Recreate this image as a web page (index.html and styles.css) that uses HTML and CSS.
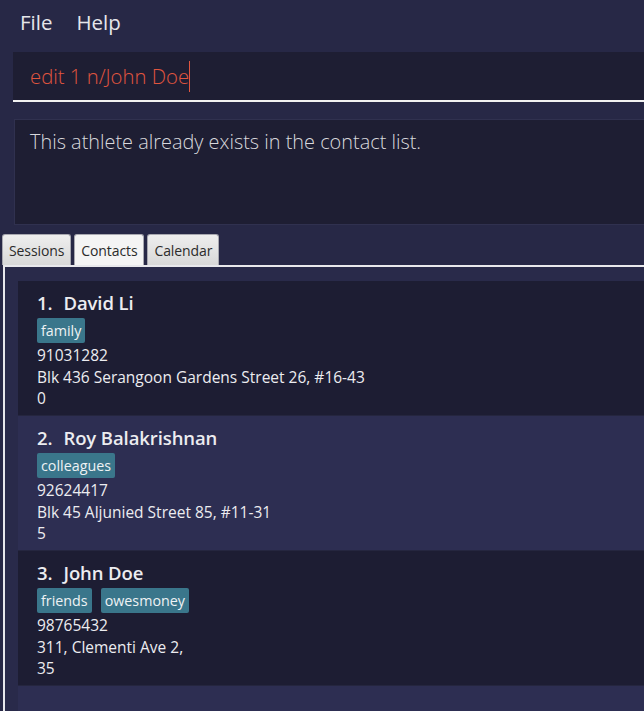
FILE: index.html
```html
<!DOCTYPE html>
<html>
<head>
<meta charset="utf-8">
<link rel="stylesheet" href="styles.css">
</head>
<body>
<div class="app">
  <div class="menubar">
    <span class="menu-item">File</span>
    <span class="menu-item">Help</span>
  </div>
  <div class="command">
    <span class="command-text">edit 1 n/John Doe</span><span class="caret"></span>
  </div>
  <div class="result">This athlete already exists in the contact list.</div>
  <div class="tabs">
    <div class="tab">Sessions</div>
    <div class="tab selected">Contacts</div>
    <div class="tab">Calendar</div>
  </div>
  <div class="panel">
    <div class="list">
      <div class="cell odd">
        <div class="name"><span class="idx">1.</span>David Li</div>
        <div class="tags"><span class="tag">family</span></div>
        <div class="line">91031282</div>
        <div class="line">Blk 436 Serangoon Gardens Street 26, #16-43</div>
        <div class="line">0</div>
      </div>
      <div class="cell even">
        <div class="name"><span class="idx">2.</span>Roy Balakrishnan</div>
        <div class="tags"><span class="tag">colleagues</span></div>
        <div class="line">92624417</div>
        <div class="line">Blk 45 Aljunied Street 85, #11-31</div>
        <div class="line">5</div>
      </div>
      <div class="cell odd">
        <div class="name"><span class="idx">3.</span>John Doe</div>
        <div class="tags"><span class="tag">friends</span><span class="tag">owesmoney</span></div>
        <div class="line">98765432</div>
        <div class="line">311, Clementi Ave 2,</div>
        <div class="line">35</div>
      </div>
      <div class="cell even"></div>
    </div>
  </div>
</div>
</body>
</html>
```
FILE: styles.css
```css
html, body {
  margin: 0;
  padding: 0;
  background: #272846;
  overflow: hidden;
}
body {
  width: 644px;
  height: 711px;
  font-family: "Open Sans", "Noto Sans", sans-serif;
}
.app {
  display: flex;
  flex-direction: column;
  height: 711px;
}
.menubar {
  display: flex;
  gap: 24px;
  height: 44px;
  align-items: center;
  padding-left: 20px;
  font-size: 20.5px;
  color: #e6e6ea;
}
.command {
  margin: 8px 0 0 13px;
  background: #1e1e33;
  border-bottom: 2px solid #f2f2f2;
  display: flex;
  align-items: center;
  padding-left: 17px;
  box-sizing: border-box;
  height: 50px;
}
.command-text {
  color: #e0553f;
  font-size: 20.3px;
  font-weight: 300;
}
.caret {
  display: inline-block;
  width: 1px;
  height: 31px;
  background: #e0553f;
}
.result {
  margin: 17px 0 0 14px;
  height: 106px;
  box-sizing: border-box;
  background: #1e1e33;
  border: 1px solid #30314f;
  border-right: none;
  padding: 8px 0 0 15px;
  color: #d8d8dc;
  font-size: 19.9px;
  font-weight: 300;
}
.tabs {
  display: flex;
  gap: 3px;
  margin: 9px 0 0 2px;
  height: 31px;
}
.tab {
  box-sizing: border-box;
  height: 31px;
  padding: 0 6px;
  border: 1px solid #a8a8b0;
  border-bottom: none;
  border-radius: 3px 3px 0 0;
  background: linear-gradient(#eeeeee, #d8d8d8);
  color: #2b2b2b;
  font-size: 14px;
  display: flex;
  align-items: center;
  letter-spacing: -0.1px;
}
.tab.selected {
  background: #f4f4f4;
}
.panel {
  flex: 1;
  margin-left: 3px;
  border-top: 2px solid #e8e8ec;
  border-left: 2px solid #e8e8ec;
  background: #292a4a;
  padding: 14px 0 0 13px;
  overflow: hidden;
}
.list {
  display: flex;
  flex-direction: column;
}
.cell {
  box-sizing: border-box;
  height: 135px;
  padding: 10px 0 0 19px;
  color: #ececf0;
  border-bottom: 1px solid #25263f;
}
.cell.odd { background: #1d1d33; }
.cell.even { background: #2d2e52; }
.name {
  font-weight: 600;
  font-size: 18.5px;
  height: 27px;
  line-height: 24px;
  letter-spacing: -0.1px;
}
.idx {
  margin-right: 11px;
}
.tags {
  display: flex;
  gap: 9px;
  height: 26px;
  margin-bottom: 1px;
}
.tag {
  background: #3a768b;
  border-radius: 2px;
  color: #eef2f4;
  font-size: 14.3px;
  line-height: 25px;
  height: 25px;
  padding: 0 4px;
}
.line {
  font-size: 15.5px;
  line-height: 21.5px;
}
```
